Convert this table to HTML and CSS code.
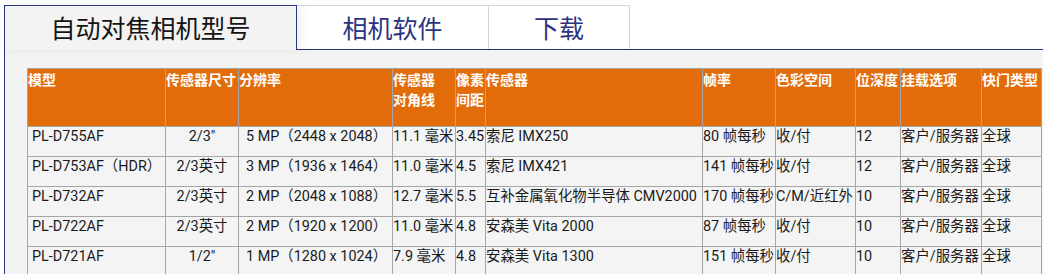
FILE: index.html
```html
<!DOCTYPE html>
<html lang="zh-CN">
<head>
<meta charset="utf-8">
<title>自动对焦相机型号</title>
<link rel="stylesheet" href="styles.css">
</head>
<body>
<div class="wrap">
  <div class="tabs">
    <div class="tab active">自动对焦相机型号</div>
    <div class="tab tab-soft">相机软件</div>
    <div class="tab tab-dl">下载</div>
  </div>
  <div class="panel">
    <table class="spec">
      <colgroup>
        <col class="c1"><col class="c2"><col class="c3"><col class="c4"><col class="c5"><col class="c6"><col class="c7"><col class="c8"><col class="c9"><col class="c10"><col class="c11">
      </colgroup>
      <thead>
        <tr>
          <th>模型</th>
          <th>传感器尺寸</th>
          <th>分辨率</th>
          <th>传感器<br>对角线</th>
          <th>像素<br>间距</th>
          <th>传感器</th>
          <th>帧率</th>
          <th>色彩空间</th>
          <th>位深度</th>
          <th>挂载选项</th>
          <th>快门类型</th>
        </tr>
      </thead>
      <tbody>
        <tr>
          <td class="model">PL-D755AF</td>
          <td class="center">2/3"</td>
          <td class="res">5 MP（2448 x 2048）</td>
          <td>11.1 毫米</td>
          <td>3.45</td>
          <td>索尼 IMX250</td>
          <td>80 帧每秒</td>
          <td>收/付</td>
          <td>12</td>
          <td>客户/服务器</td>
          <td>全球</td>
        </tr>
        <tr>
          <td class="model">PL-D753AF（HDR）</td>
          <td class="center">2/3英寸</td>
          <td class="res">3 MP（1936 x 1464）</td>
          <td>11.0 毫米</td>
          <td>4.5</td>
          <td>索尼 IMX421</td>
          <td>141 帧每秒</td>
          <td>收/付</td>
          <td>12</td>
          <td>客户/服务器</td>
          <td>全球</td>
        </tr>
        <tr>
          <td class="model">PL-D732AF</td>
          <td class="center">2/3英寸</td>
          <td class="res">2 MP（2048 x 1088）</td>
          <td>12.7 毫米</td>
          <td>5.5</td>
          <td>互补金属氧化物半导体 CMV2000</td>
          <td>170 帧每秒</td>
          <td>C/M/近红外</td>
          <td>10</td>
          <td>客户/服务器</td>
          <td>全球</td>
        </tr>
        <tr>
          <td class="model">PL-D722AF</td>
          <td class="center">2/3英寸</td>
          <td class="res">2 MP（1920 x 1200）</td>
          <td>11.0 毫米</td>
          <td>4.8</td>
          <td>安森美 Vita 2000</td>
          <td>87 帧每秒</td>
          <td>收/付</td>
          <td>10</td>
          <td>客户/服务器</td>
          <td>全球</td>
        </tr>
        <tr>
          <td class="model">PL-D721AF</td>
          <td class="center">1/2"</td>
          <td class="res">1 MP（1280 x 1024）</td>
          <td>7.9 毫米</td>
          <td>4.8</td>
          <td>安森美 Vita 1300</td>
          <td>151 帧每秒</td>
          <td>收/付</td>
          <td>10</td>
          <td>客户/服务器</td>
          <td>全球</td>
        </tr>
      </tbody>
    </table>
  </div>
</div>
</body>
</html>
```
FILE: styles.css
```css
html, body {
  margin: 0;
  padding: 0;
  background: #ffffff;
  overflow: hidden;
}

body {
  font-family: Roboto, "Noto Sans CJK SC", sans-serif;
  color: #1a1a1a;
}

.wrap {
  padding: 5px 0 0 4px;
  height: 269px;
  display: flex;
  flex-direction: column;
}

.tabs {
  display: flex;
  height: 44px;
  flex: none;
}

.tab {
  box-sizing: border-box;
  height: 44px;
  border-top: 1px solid #d6d6d6;
  border-right: 1px solid #d6d6d6;
  background: #ffffff;
  color: #2b3480;
  font-family: "Noto Sans CJK SC", sans-serif;
  font-size: 25px;
  line-height: 42px;
  text-align: center;
}

.tab.active {
  position: relative;
  z-index: 2;
  width: 293px;
  height: 45px;
  margin-bottom: -1px;
  border: 1px solid #2b3480;
  border-bottom: none;
  background: #f3f3f3;
  color: #141414;
  box-shadow: 3px 0 10px rgba(0, 0, 0, 0.07);
}

.tab-soft {
  width: 192px;
}

.tab-dl {
  width: 141px;
}

.panel {
  flex: 1;
  position: relative;
  z-index: 1;
  border-top: 1px solid #2b3480;
  border-left: 1px solid #2b3480;
  background: #f3f3f3;
  padding: 18px 0 0 22px;
}

.spec {
  table-layout: fixed;
  border-collapse: collapse;
  width: 1015px;
  font-size: 14.4px;
  line-height: 20px;
}

.c1 { width: 138px; }
.c2 { width: 73px; }
.c3 { width: 154px; }
.c4 { width: 63px; }
.c5 { width: 30px; }
.c6 { width: 217px; }
.c7 { width: 73px; }
.c8 { width: 80px; }
.c9 { width: 45px; }
.c10 { width: 81px; }
.c11 { width: 60px; }

.spec th,
.spec td {
  border: 1px solid #a6a6a6;
  padding: 0 0 9px 0;
  vertical-align: top;
  text-align: left;
  white-space: nowrap;
  overflow: hidden;
}

.spec th {
  background: #e36c0a;
  color: #ffffff;
  font-weight: bold;
  font-size: 14px;
  font-family: "Noto Sans CJK SC", sans-serif;
  padding-bottom: 17px;
}

.spec td {
  background: #f4f4f4;
  color: #1a1a1a;
}

.spec td.model {
  padding-left: 4px;
}

.spec td.center {
  text-align: center;
}

.spec td.res {
  padding-left: 7px;
}
```
